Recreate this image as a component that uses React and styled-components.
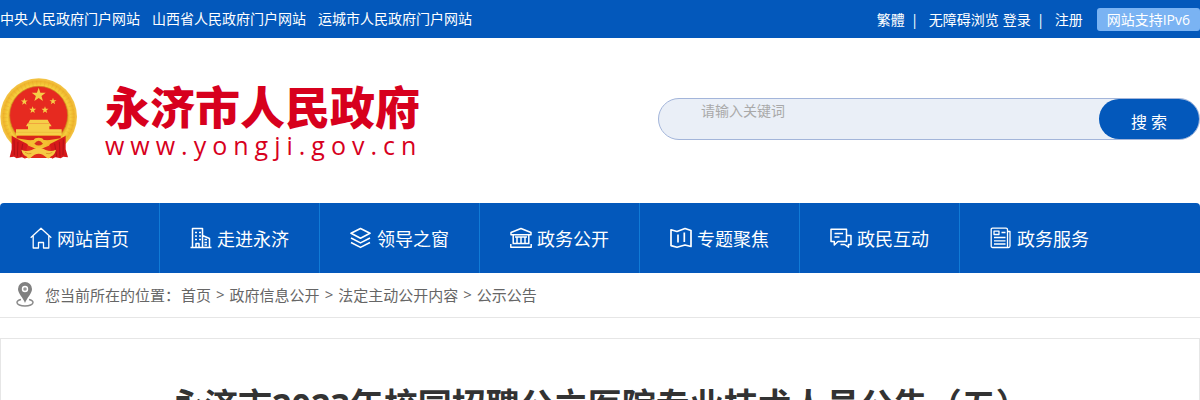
import styled, { createGlobalStyle } from "styled-components";

const GlobalStyle = createGlobalStyle`
  * {
    box-sizing: border-box;
  }
  body {
    margin: 0;
    background: #fff;
    font-family: "Open Sans", "Noto Sans CJK SC", sans-serif;
    font-size: 14px;
    color: #333;
  }
  a {
    color: inherit;
    text-decoration: none;
  }
`;

const portals = [
  "中央人民政府门户网站",
  "山西省人民政府门户网站",
  "运城市人民政府门户网站",
];

const crumbs = ["首页", "政府信息公开", "法定主动公开内容", "公示公告"];

const HomeIcon = () => (
  <NavIcon viewBox="0 0 22 22">
    <path d="M.7 10.8 11 1.2l10.3 9.6M3.2 9v12h5.3v-5.5h5V21h5.3V9" />
  </NavIcon>
);

const BuildingIcon = () => (
  <NavIcon viewBox="0 0 22 22" $stroke={1.5}>
    <path d="M.5 20.5h21M2.5 20.5v-19h10v19M12.5 8.500l7 3v9M6 20v-3.500h3V20" />
    <path d="M5 5.500h2M9 5.500h2M5 9h2M9 9h2M5 12.500h2M9 12.500h2M14.500 12.500h2.500M14.500 15.500h2.500M14.500 18h2.500" />
  </NavIcon>
);

const LayersIcon = () => (
  <NavIcon viewBox="0 0 22 22" $stroke={1.6}>
    <path d="M10.500 1.500 20 6.300l-9.500 4.900L1 6.300zM1 11l9.500 4.900L20 11M1 15.500l9.500 4.900L20 15.500" />
  </NavIcon>
);

const HallIcon = () => (
  <NavIcon viewBox="0 0 22 22" $stroke={1.5}>
    <path d="M11 1.500 1 5.500v2.300h20V5.500zM3.200 8v8M18.800 8v8M7 10v6M11 10v6M15 10v6M5 10h12M2.500 16.500h17M.8 17v3.300h20.400V17M.8 20.300h20.400" />
  </NavIcon>
);

const MapIcon = () => (
  <NavIcon viewBox="0 0 22 22" $stroke={1.7}>
    <path d="M1 2.800 7 4.500l8-3 6 2v16l-6-1.500-8 2.300-6-1.700zM8 7.500v8M14.300 5.500V15" />
  </NavIcon>
);

const ChatIcon = () => (
  <NavIcon viewBox="0 0 22 22" $stroke={1.5}>
    <path d="M1 2.200h15.500v12.300H8L4.300 18v-3.500H1zM4.500 6.500h8.500M4.500 10h5M16.500 8.500H21v9h-2.500v2.700l-4-2.700h-4" />
  </NavIcon>
);

const PaperIcon = () => (
  <NavIcon viewBox="0 0 22 22">
    <path d="M2.500 1.200h13.500q1.500 0 1.500 1.500v17.800H2.700q-1.500 0-1.500-1.500V2.500q0-1.300 1.300-1.300zM17.500 4.500h2.500V19q0 1.500-1.500 1.500h-2M4 4.200h5v3.300H4zM11.500 5.500h4M4 10.500h11.500M4 13.800h11.500M4 17h11.500" />
  </NavIcon>
);

const navItems = [
  { text: "网站首页", Icon: HomeIcon },
  { text: "走进永济", Icon: BuildingIcon },
  { text: "领导之窗", Icon: LayersIcon },
  { text: "政务公开", Icon: HallIcon },
  { text: "专题聚焦", Icon: MapIcon },
  { text: "政民互动", Icon: ChatIcon },
  { text: "政务服务", Icon: PaperIcon },
];

const starPoints = (cx, cy, r) =>
  Array.from({ length: 10 }, (_, i) => {
    const a = (Math.PI / 5) * i - Math.PI / 2;
    const len = i % 2 ? r * 0.4 : r;
    return `${cx + len * Math.cos(a)},${cy + len * Math.sin(a)}`;
  }).join(" ");

const Emblem = () => (
  <EmblemSvg viewBox="0 24 231 246" aria-hidden="true">
    <defs>
      <radialGradient id="gold">
        <stop offset="0.72" stopColor="#e09a1c" />
        <stop offset="0.82" stopColor="#f6cf3e" />
        <stop offset="0.92" stopColor="#efb52c" />
        <stop offset="1" stopColor="#f4c64a" />
      </radialGradient>
    </defs>
    <circle cx="116" cy="140" r="115" fill="url(#gold)" />
    <circle
      cx="116"
      cy="140"
      r="101"
      fill="none"
      stroke="#e0a027"
      strokeWidth="14"
      strokeDasharray="3 9"
      opacity="0.3"
    />
    <circle cx="116" cy="136" r="87" fill="#e62a20" stroke="#c98a20" strokeWidth="2" />
    <path d="M44 196h145l-17 22q-56 22-112 0z" fill="#f3b92e" />
    <path d="M50 198h132v7q-66 14-132 0z" fill="#d9251b" />
    <g fill="#f5cf48">
      <polygon points={starPoints(116, 75, 22)} />
      <polygon points={starPoints(73, 95, 11)} />
      <polygon points={starPoints(159, 94, 11)} />
      <polygon points={starPoints(98, 120, 11)} />
      <polygon points={starPoints(135, 120, 11)} />
      <path d="M90 149h53l5 10H85zM83 160h66l6 9H78zM84 169h64v9H84zM48 178h137v17H48z" />
    </g>
    <path d="M48 187h137" stroke="#e0a02a" strokeWidth="1" />
    <path
      d="M35 197 54 208 82 222 86 230 76 266 66 262 50 265 42 260 29 262 35 238z"
      fill="#d6191b"
    />
    <path
      d="M197 197 178 208 150 222 146 230 156 266 166 262 182 265 190 260 204 262 197 238z"
      fill="#d6191b"
    />
    <path
      d="M42 208 43 255M54 215 52 260M68 221 62 260M190 208 189 255M178 215 180 260M164 221 170 260"
      stroke="#b01216"
      strokeWidth="3"
      fill="none"
    />
    <path d="M82 226q34 18 68 0l8 38H74z" fill="#e02a1d" />
    <path
      d="M88 219q2-10 13-9 3-7 15-7t15 7q11-1 13 9-4 12-16 10-12 8-24 0-12 2-16-10z"
      fill="#f4bf32"
    />
    <path d="M103 221q13-17 26 0-13 11-26 0z" fill="#d6301e" />
    <path
      d="M64 239q15 8 31 1 21-15 42 0 16 7 31-1-3 15-15 20-4 9-12 5-13-13-25-13t-25 13q-8 4-12-5-12-5-15-20z"
      fill="#f6c944"
    />
    <path d="M75 247q10 7 19 3M157 247q-10 7-19 3" stroke="#cd861c" strokeWidth="2" fill="none" />
  </EmblemSvg>
);

const App = () => {
  return (
    <>
      <GlobalStyle />
      <TopBar>
        <TopGroup>
          {portals.map((name) => (
            <a href="#" key={name}>
              {name}
            </a>
          ))}
        </TopGroup>
        <Tools>
          <a href="#" lang="zh-Hant">
            繁體
          </a>
          <Divider>|</Divider>
          <ToolPair>
            <a href="#">无障碍浏览</a>
            <a href="#">登录</a>
          </ToolPair>
          <Divider>|</Divider>
          <a href="#">注册</a>
          <Badge>网站支持IPv6</Badge>
        </Tools>
      </TopBar>
      <Header>
        <Brand href="#">
          <Emblem />
          <BrandText>
            <BrandName>永济市人民政府</BrandName>
            <BrandUrl>www.yongji.gov.cn</BrandUrl>
          </BrandText>
        </Brand>
        <Search onSubmit={(e) => e.preventDefault()}>
          <SearchInput
            type="text"
            placeholder="请输入关键词"
            aria-label="请输入关键词"
          />
          <SearchButton type="submit">搜 索</SearchButton>
        </Search>
      </Header>
      <Nav>
        {navItems.map(({ text, Icon }) => (
          <NavLink href="#" key={text}>
            <Icon />
            {text}
          </NavLink>
        ))}
      </Nav>
      <Breadcrumb>
        <PinIcon viewBox="0 0 18 26" aria-hidden="true">
          <path
            d="M5 18.500C2.500 19 1 20.200 1 21.500 1 23.500 4.500 25 9 25s8-1.500 8-3.500c0-1.300-1.500-2.500-4-3"
            fill="none"
            stroke="#8a8a8a"
            strokeWidth="1.500"
          />
          <path
            d="M9 1a7 7 0 0 0-7 7c0 4.500 5 8.500 7 14 2-5.500 7-9.500 7-14a7 7 0 0 0-7-7zm0 3.800a3.200 3.200 0 1 1 0 6.400 3.200 3.200 0 0 1 0-6.400z"
            fill="#808080"
            fillRule="evenodd"
          />
          <circle cx="9" cy="8" r="1.800" fill="#999" />
        </PinIcon>
        <span>您当前所在的位置：</span>
        <CrumbList>
          {crumbs.map((crumb, i) => (
            <Crumb key={crumb}>
              {i > 0 && <span>&gt;</span>}
              <a href="#">{crumb}</a>
            </Crumb>
          ))}
        </CrumbList>
      </Breadcrumb>
      <Article>
        <Title>永济市2023年校园招聘公立医院专业技术人员公告（五）</Title>
      </Article>
    </>
  );
};

const TopBar = styled.div`
  display: flex;
  align-items: center;
  justify-content: space-between;
  height: 38px;
  background: #0358bb;
  color: #fff;
  white-space: nowrap;
`;

const TopGroup = styled.div`
  display: flex;
  gap: 12px;
  padding-bottom: 2px;
`;

const Tools = styled.div`
  display: flex;
  align-items: center;
`;

const ToolPair = styled.div`
  display: flex;
  gap: 4px;
`;

const Divider = styled.span`
  width: 24px;
  padding-right: 4px;
  text-align: center;
`;

const Badge = styled.span`
  margin-left: 14px;
  padding: 0 10px;
  line-height: 23px;
  border-radius: 3px;
  background: #7ab3f3;
`;

const Header = styled.header`
  display: flex;
  align-items: center;
  justify-content: space-between;
  height: 165px;
  padding-bottom: 3px;
`;

const Brand = styled.a`
  display: flex;
  align-items: center;
  gap: 28px;
  color: #d7001d;
`;

const EmblemSvg = styled.svg`
  width: 77px;
  height: 82px;
`;

const BrandText = styled.div`
  display: flex;
  flex-direction: column;
  padding-top: 6px;
`;

const BrandName = styled.strong`
  font-size: 45px;
  font-weight: 900;
  line-height: 46px;
`;

const BrandUrl = styled.span`
  font-size: 25px;
  line-height: 28px;
  letter-spacing: 6px;
`;

const Search = styled.form`
  display: flex;
  width: 542px;
  height: 42px;
  border: 1px solid #a3b5da;
  border-radius: 21px;
  background: #eaeff7;
`;

const SearchInput = styled.input`
  flex: 1;
  min-width: 0;
  height: 22px;
  padding: 0 0 0 42px;
  border: none;
  outline: none;
  background: transparent;
  font: inherit;
  &::placeholder {
    color: #a9a9a9;
  }
`;

const SearchButton = styled.button`
  width: 100px;
  height: 40px;
  padding: 4px 0 0;
  border: none;
  border-radius: 20px;
  background: #0358bb;
  color: #fff;
  font-family: inherit;
  font-size: 16px;
  cursor: pointer;
`;

const Nav = styled.nav`
  display: flex;
  height: 70px;
  border-radius: 4px 4px 0 0;
  background: #0358bb;
`;

const NavLink = styled.a`
  display: flex;
  align-items: center;
  justify-content: center;
  gap: 5px;
  width: 160px;
  border-right: 1px solid #117bd6;
  color: #fff;
  font-size: 18px;
  white-space: nowrap;
  &:last-child {
    border-right-color: transparent;
  }
`;

const NavIcon = styled.svg`
  width: 22px;
  height: 22px;
  fill: none;
  stroke: #fff;
  stroke-width: ${({ $stroke }) => $stroke || 1.3};
  stroke-linejoin: round;
`;

const Breadcrumb = styled.div`
  display: flex;
  align-items: center;
  height: 45px;
  padding: 0 0 2px 16px;
  border-bottom: 1px solid #e6e6e6;
  color: #666;
  font-size: 15px;
`;

const PinIcon = styled.svg`
  width: 18px;
  height: 26px;
  margin-right: 11px;
`;

const CrumbList = styled.div`
  display: flex;
  gap: 5px;
  padding-left: 1px;
`;

const Crumb = styled.span`
  display: flex;
  gap: 5px;
`;

const Article = styled.main`
  margin-top: 20px;
  padding: 36px 20px;
  border: 1px solid #e6e6e6;
`;

const Title = styled.h1`
  margin: 0;
  font-size: 34px;
  line-height: 60px;
  text-align: center;
  color: #333;
`;

export default App;
